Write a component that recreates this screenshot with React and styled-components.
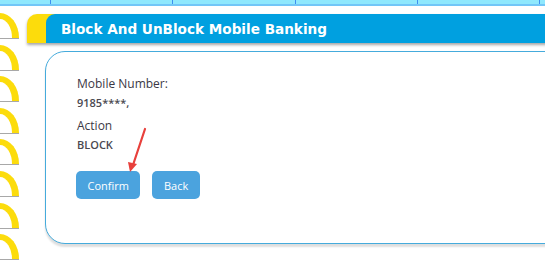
import React from 'react'
import styled, { createGlobalStyle } from 'styled-components'

const GlobalStyle = createGlobalStyle`
    html, body {
        margin: 0;
        padding: 0;
        background: #fff;
        overflow: hidden;
    }
    body {
        font-family: "Open Sans", "Liberation Sans", sans-serif;
    }
`

const stripCells = [51, 122, 123, 122, 122, 40]
const tabCount = 8

const App = () => {
    return (
        <Page>
            <GlobalStyle />
            <TopStrip>
                {stripCells.map((w, i) => (
                    <StripCell key={i} style={{ width: w }} />
                ))}
            </TopStrip>
            <Body>
                <TabColumn>
                    {Array.from({ length: tabCount }).map((_, i) => (
                        <Tab key={i} />
                    ))}
                </TabColumn>
                <Main>
                    <Header>
                        <HeaderBar>
                            <Title>Block And UnBlock Mobile Banking</Title>
                        </HeaderBar>
                    </Header>
                    <Card>
                        <Field>
                            <Label>Mobile Number:</Label>
                            <Value>9185****,</Value>
                        </Field>
                        <Field>
                            <Label>Action</Label>
                            <Value>BLOCK</Value>
                        </Field>
                        <Buttons>
                            <Button>Confirm</Button>
                            <Button>Back</Button>
                        </Buttons>
                        <Arrow width="30" height="50" viewBox="0 0 30 50">
                            <line x1="22" y1="2" x2="10" y2="38" stroke="#e8403c" strokeWidth="2.2" strokeLinecap="round" />
                            <polygon points="7,45 5,35 14,37" fill="#e8403c" />
                        </Arrow>
                    </Card>
                </Main>
            </Body>
        </Page>
    )
}

const Page = styled.div`
    width: 545px;
    height: 261px;
    overflow: hidden;
`

const TopStrip = styled.div`
    display: flex;
    height: 4px;
    background: #8fe8fd;
    border-bottom: 2px solid #72c6f7;
`

const StripCell = styled.div`
    flex-shrink: 0;
    border-right: 1px solid #3d8ef0;
    box-sizing: border-box;
`

const Body = styled.div`
    display: flex;
`

const TabColumn = styled.div`
    width: 27px;
    flex-shrink: 0;
    display: flex;
    flex-direction: column;
    gap: 6.6px;
    padding-top: 7px;
`

const Tab = styled.div`
    width: 12px;
    height: 19px;
    border-top: 6px solid #fcdc0c;
    border-right: 7px solid #fcdc0c;
    border-top-right-radius: 19px 25px;
    box-shadow: 0 1px 0 #a8a8a8;
`

const Main = styled.div`
    flex: 1;
    padding-top: 8px;
`

const Header = styled.div`
    height: 29px;
    background: #fcdc0c;
    border-top-left-radius: 10px;
    box-shadow: 0 2px 3px rgba(0, 0, 0, 0.35);
    display: flex;
`

const HeaderBar = styled.div`
    flex: 1;
    margin-left: 19px;
    background: #00a0e0;
    border-top-left-radius: 9px;
    display: flex;
    align-items: center;
    padding-left: 15px;
`

const Title = styled.h1`
    margin: 0;
    font-family: "DejaVu Sans", Verdana, sans-serif;
    font-weight: bold;
    font-size: 13.6px;
    color: #fff;
`

const Card = styled.div`
    position: relative;
    box-sizing: border-box;
    margin-top: 8px;
    margin-left: 18px;
    width: 560px;
    height: 193px;
    border: 1px solid #45abdc;
    border-radius: 20px 0 0 20px;
    box-shadow: 0 3px 2px rgba(0, 0, 0, 0.13);
    padding: 22px 0 0 31px;
    background: #fff;
`

const Field = styled.div`
    display: flex;
    flex-direction: column;
    margin-bottom: 3.5px;
`

const Label = styled.span`
    font-size: 12px;
    line-height: 19px;
    color: #3b3845;
`

const Value = styled.span`
    font-size: 11px;
    line-height: 19px;
    font-weight: 600;
    color: #4a4850;
`

const Buttons = styled.div`
    display: flex;
    gap: 12px;
    margin-top: 17.5px;
    margin-left: -1px;
`

const Button = styled.button`
    height: 28px;
    padding: 0 11.5px;
    border: none;
    border-radius: 5px;
    background: #4ba3de;
    color: #fff;
    font-family: "Open Sans", "Liberation Sans", sans-serif;
    font-size: 11px;
    cursor: pointer;
`

const Arrow = styled.svg`
    position: absolute;
    left: 77px;
    top: 75px;
`

export default App
